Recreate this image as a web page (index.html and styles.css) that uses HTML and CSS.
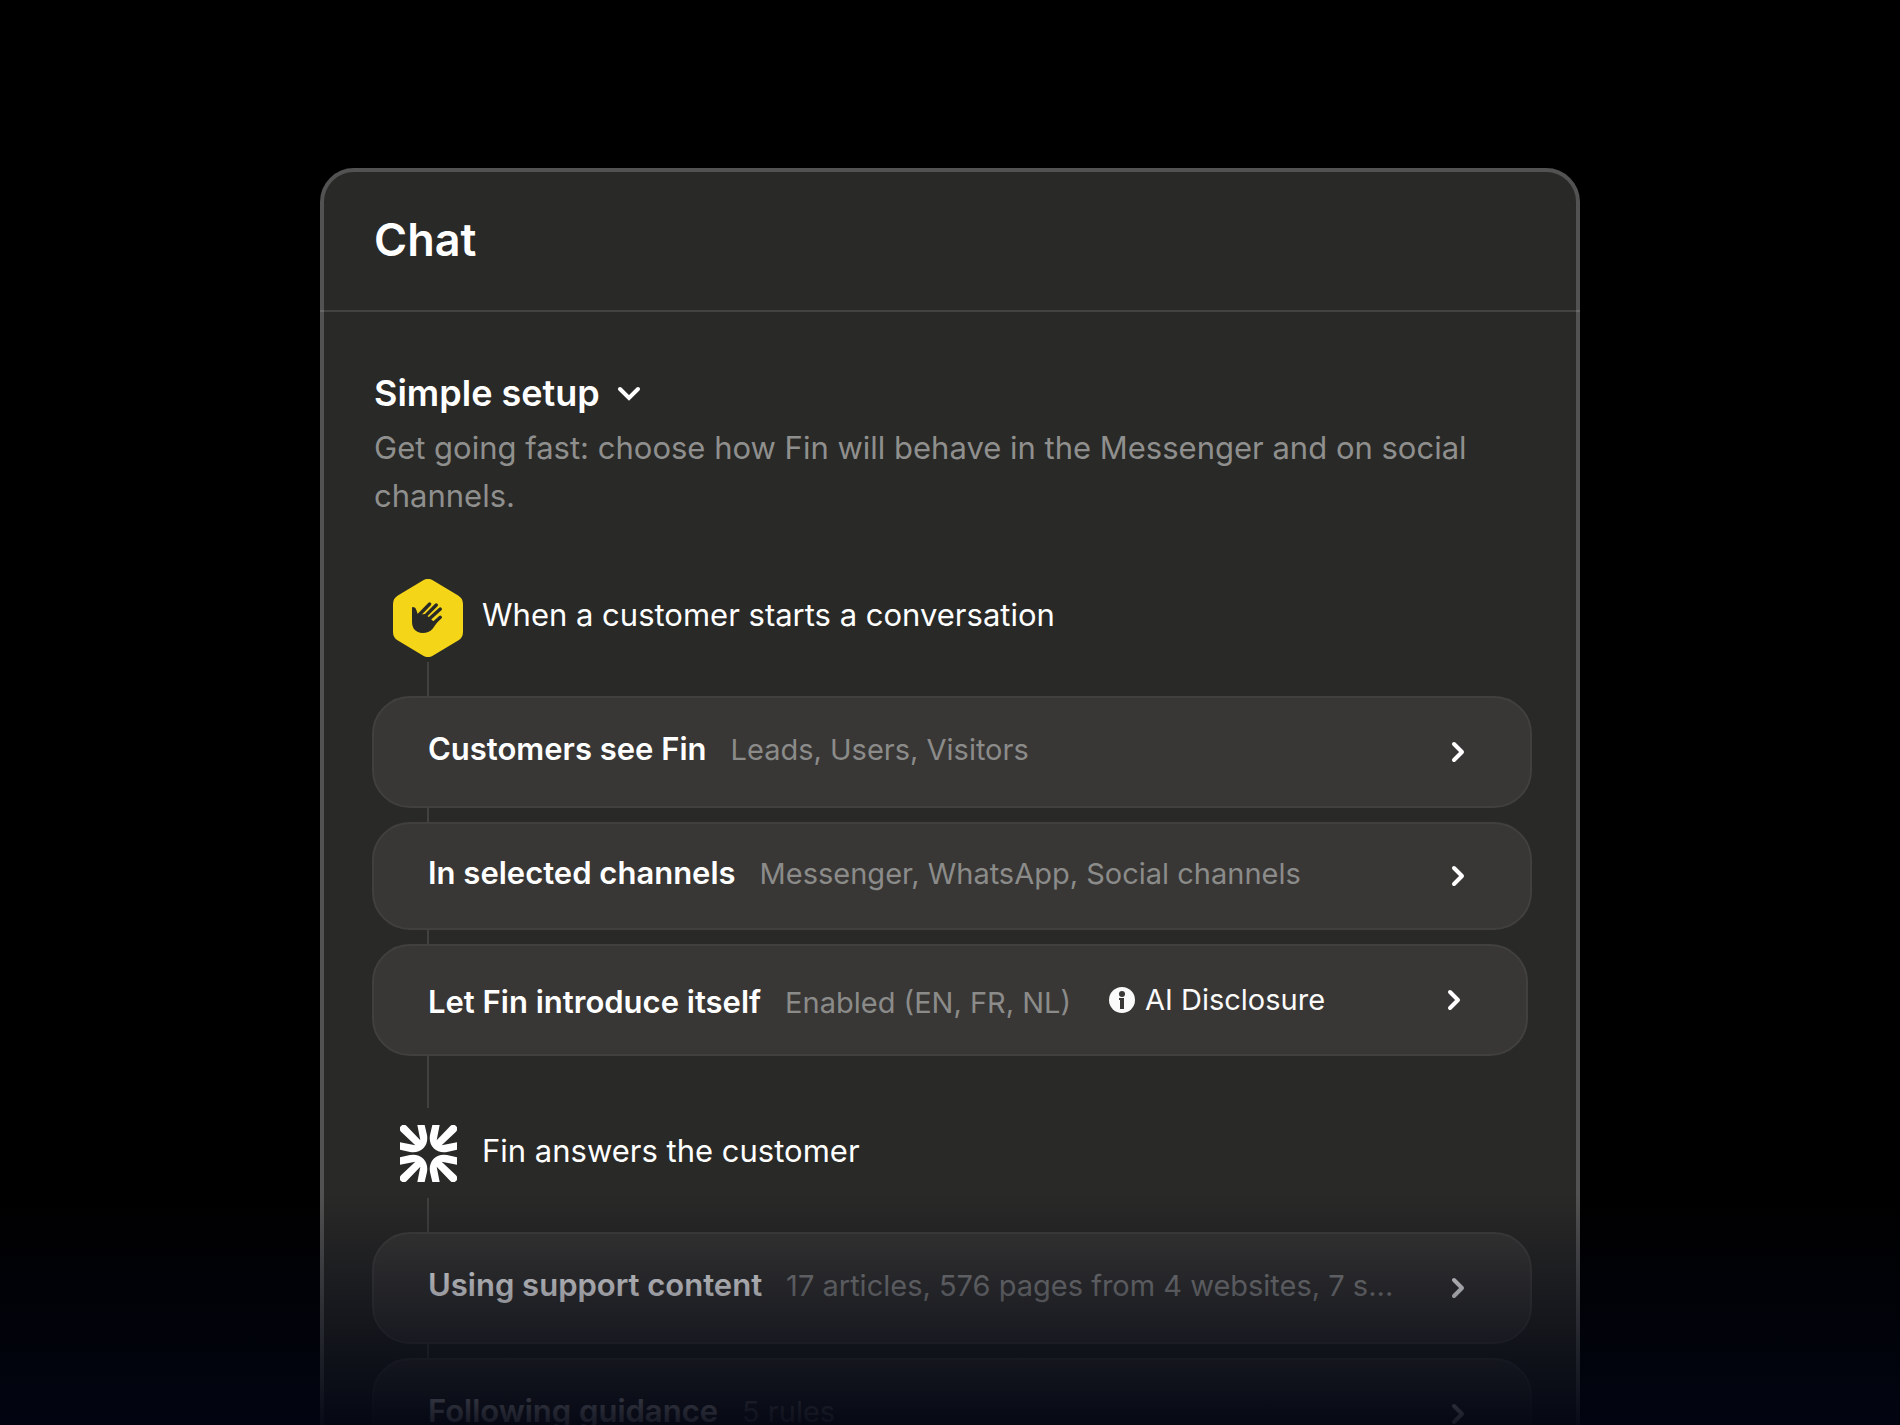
FILE: index.html
```html
<!DOCTYPE html>
<html lang="en">
<head>
    <meta charset="UTF-8">
    <meta name="viewport" content="width=device-width, initial-scale=1.0">
    <title>Chat - Simple setup</title>
    <link rel="stylesheet" href="styles.css">
</head>
<body>
    <!-- Shared icons -->
    <svg class="icon-defs" aria-hidden="true">
        <symbol id="chevron" viewBox="0 0 14 22">
            <path d="M3 3l8 8-8 8" fill="none" stroke="currentColor" stroke-width="4" stroke-linecap="round" stroke-linejoin="round"/>
        </symbol>
        <symbol id="fin-petal" viewBox="0 0 171 171">
            <path d="M52 0H74L81 30Q85 54 70 70Q54 85 30 81L0 74V52L46 61L3 20A12 12 0 0 1 20 3L61 46Z" fill="currentColor"/>
        </symbol>
    </svg>

    <main class="stage">
        <section class="card">
            <header class="card-header">
                <h1>Chat</h1>
            </header>

            <div class="card-body">
                <div class="intro">
                    <button type="button" class="setup-toggle">
                        Simple setup
                        <svg class="toggle-icon" viewBox="0 0 24 16" aria-hidden="true">
                            <path d="M3 4l9 9 9-9" fill="none" stroke="currentColor" stroke-width="4" stroke-linecap="round" stroke-linejoin="miter"/>
                        </svg>
                    </button>
                    <p>Get going fast: choose how Fin will behave in the Messenger and on social channels.</p>
                </div>

                <div class="step">
                    <svg class="step-icon" viewBox="0 0 70 78" aria-hidden="true">
                        <polygon points="35,10 60,25 60,53 35,68 10,53 10,25" fill="#f5d518" stroke="#f5d518" stroke-width="20" stroke-linejoin="round"/>
                        <g transform="translate(19 23) scale(.333)" fill="#292927" stroke="#292927" stroke-linecap="round">
                            <path stroke="none" d="M0 18Q0 14 4 15Q12 16 13 24L18 38L40 36L64 58L82 52L62 80Q50 93 32 93Q0 92 0 58Z"/>
                            <path stroke-width="10" d="M18 42L53 6M32 50L73 9M44 58L85 21M56 72L85 46"/>
                        </g>
                    </svg>
                    <h2>When a customer starts a conversation</h2>
                </div>

                <div class="connector lead"></div>
                <button type="button" class="row">
                    <span class="row-text"><strong>Customers see Fin</strong><span class="detail">Leads, Users, Visitors</span></span>
                    <svg class="chevron" aria-hidden="true"><use href="#chevron"/></svg>
                </button>
                <div class="connector"></div>
                <button type="button" class="row compact">
                    <span class="row-text"><strong>In selected channels</strong><span class="detail">Messenger, WhatsApp, Social channels</span></span>
                    <svg class="chevron" aria-hidden="true"><use href="#chevron"/></svg>
                </button>
                <div class="connector"></div>
                <button type="button" class="row intro-row">
                    <span class="row-text"><strong>Let Fin introduce itself</strong><span class="detail">Enabled (EN, FR, NL)</span></span>
                    <span class="disclosure">
                        <svg viewBox="0 0 26 26" aria-hidden="true">
                            <circle cx="13" cy="13" r="13" fill="#fafafa"/>
                            <circle cx="13" cy="7" r="3" fill="#383735"/>
                            <path d="M10 11h5v11h-4v-9h-1z" fill="#383735"/>
                        </svg>
                        AI Disclosure
                    </span>
                    <svg class="chevron" aria-hidden="true"><use href="#chevron"/></svg>
                </button>
                <div class="connector tail"></div>

                <div class="step fin-step">
                    <svg class="fin-icon" viewBox="0 0 171 171" aria-hidden="true">
                        <use href="#fin-petal" width="171" height="171"/>
                        <use href="#fin-petal" width="171" height="171" transform="translate(171 0) scale(-1 1)"/>
                        <use href="#fin-petal" width="171" height="171" transform="translate(0 171) scale(1 -1)"/>
                        <use href="#fin-petal" width="171" height="171" transform="translate(171 171) scale(-1 -1)"/>
                    </svg>
                    <h2>Fin answers the customer</h2>
                </div>

                <div class="connector lead"></div>
                <button type="button" class="row">
                    <span class="row-text"><strong>Using support content</strong><span class="detail">17 articles, 576 pages from 4 websites, 7 s...</span></span>
                    <svg class="chevron" aria-hidden="true"><use href="#chevron"/></svg>
                </button>
                <div class="connector"></div>
                <button type="button" class="row">
                    <span class="row-text"><strong>Following guidance</strong><span class="detail">5 rules</span></span>
                    <svg class="chevron" aria-hidden="true"><use href="#chevron"/></svg>
                </button>
            </div>
        </section>
        <div class="fade"></div>
    </main>
</body>
</html>
```
FILE: styles.css
```css
* {
    box-sizing: border-box;
}

body {
    margin: 0;
    background-color: #000;
    color: #fff;
    font-family: Inter, "Liberation Sans", sans-serif;
}

h1, h2, p {
    margin: 0;
}

button {
    font: inherit;
    color: inherit;
    cursor: pointer;
}

.icon-defs {
    position: absolute;
    width: 0;
    height: 0;
}

.stage {
    position: relative;
    height: 100vh;
    padding: 168px 320px 0;
    overflow: hidden;
}

.card {
    background-color: #292927;
    border: 4px solid #525252;
    border-radius: 34px;
}

.card-header {
    margin: 0 -4px;
    padding: 40px 54px 42px;
    border-bottom: 2px solid rgba(255, 255, 255, 0.12);
}

.card-header h1 {
    font-size: 45px;
    font-weight: 600;
    line-height: 56px;
}

.card-body {
    padding: 57px 44px 48px 48px;
}

.intro {
    padding: 0 2px;
    margin-bottom: 59px;
}

.setup-toggle {
    display: flex;
    align-items: center;
    gap: 17px;
    padding: 0;
    border: none;
    background: none;
    font-size: 36px;
    font-weight: 600;
    line-height: 48px;
}

.toggle-icon {
    width: 24px;
    height: 16px;
}

.intro p {
    margin-top: 7px;
    color: #8f8f8e;
    font-size: 31px;
    line-height: 48px;
}

.step {
    display: flex;
    align-items: center;
    gap: 19px;
    padding-left: 21px;
}

.step h2 {
    padding-bottom: 6px;
    font-size: 31px;
    font-weight: 400;
    line-height: 48px;
}

.step-icon {
    width: 70px;
    height: 78px;
}

.fin-step {
    gap: 25px;
    height: 90px;
    padding-left: 28px;
}

.fin-step h2 {
    padding-bottom: 4px;
}

.fin-icon {
    width: 57px;
    height: 57px;
}

/* Line that joins the steps and rows */
.connector {
    width: 2px;
    height: 14px;
    margin-left: 55px;
    background-color: #414140;
}

.connector.lead {
    height: 34px;
    margin-top: 5px;
}

.fin-step + .connector.lead {
    margin-top: 0;
}

.connector.tail {
    height: 52px;
}

.row {
    display: flex;
    align-items: center;
    width: 100%;
    height: 112px;
    padding: 0 65px 0 54px;
    background-color: #383735;
    border: 2px solid #41403f;
    border-radius: 38px;
    text-align: left;
}

.row.compact {
    height: 108px;
}

.row.intro-row {
    width: calc(100% - 4px);
}

.row-text {
    display: flex;
    align-items: baseline;
    gap: 24px;
    padding-bottom: 5px;
    line-height: 40px;
    white-space: nowrap;
}

.intro-row .row-text {
    padding: 5px 0 0;
}

.row strong {
    font-size: 31px;
    font-weight: 600;
}

.detail {
    color: #8b8b8a;
    font-size: 29px;
}

.disclosure {
    display: flex;
    align-items: center;
    gap: 10px;
    margin-left: 38px;
    color: #fafafa;
    font-size: 29px;
    line-height: 40px;
    white-space: nowrap;
}

.disclosure svg {
    width: 26px;
    height: 26px;
}

.chevron {
    flex: none;
    width: 14px;
    height: 22px;
    margin-left: auto;
}

/* Bottom of the card sinks into the dark */
.fade {
    position: absolute;
    right: 0;
    bottom: 0;
    left: 0;
    height: 232px;
    background: linear-gradient(rgba(2, 5, 18, 0), rgba(2, 5, 18, 0.92));
    pointer-events: none;
}

@media (max-width: 1600px) {
    .stage {
        padding: 80px 40px 0;
    }
}
```
